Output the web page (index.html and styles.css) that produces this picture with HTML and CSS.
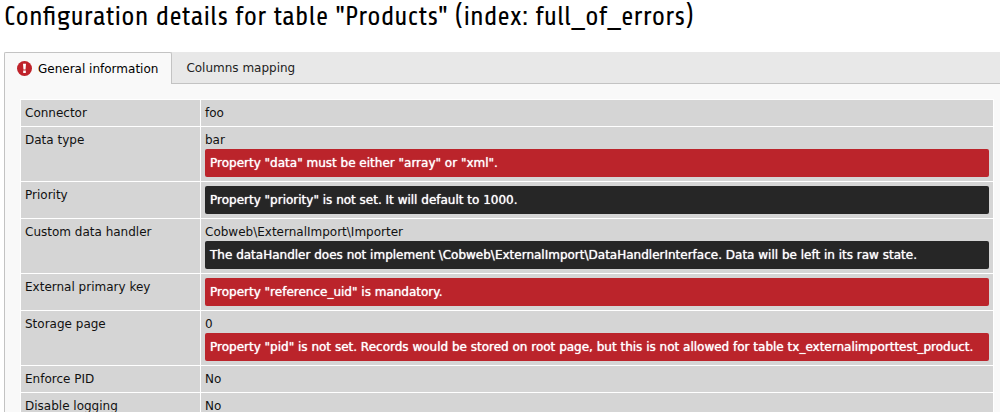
FILE: index.html
```html
<!DOCTYPE html>
<html lang="en">
<head>
<meta charset="utf-8">
<title>Configuration details</title>
<link rel="stylesheet" href="styles.css">
</head>
<body>
<main class="module">
  <h1 class="title">Configuration details for table "Products" (index: full_of_errors)</h1>
  <div class="tabs" role="tablist">
    <button class="tab tab-active" type="button" role="tab" id="tab-general" aria-selected="true" aria-controls="general">
      <svg class="tab-icon" viewBox="0 0 16 16" aria-hidden="true">
        <circle cx="8" cy="8" r="8" fill="#bf232b"/>
        <path d="M6.4 2.8h3.2L9.1 9H6.9zM6.6 10.2h2.8v2.6H6.6z" fill="#fff"/>
      </svg>
      <span>General information</span>
    </button>
    <button class="tab" type="button" role="tab" aria-selected="false">Columns mapping</button>
  </div>
  <section class="panel" id="general" role="tabpanel" aria-labelledby="tab-general">
    <table class="details">
      <tbody>
        <tr><th class="name" scope="row">Connector</th><td class="value">foo</td></tr>
        <tr><th class="name" scope="row">Data type</th><td class="value">bar<div class="label label-danger">Property "data" must be either "array" or "xml".</div></td></tr>
        <tr><th class="name" scope="row">Priority</th><td class="value"><div class="label label-notice">Property "priority" is not set. It will default to 1000.</div></td></tr>
        <tr><th class="name" scope="row">Custom data handler</th><td class="value">Cobweb\ExternalImport\Importer<div class="label label-notice">The dataHandler does not implement \Cobweb\ExternalImport\DataHandlerInterface. Data will be left in its raw state.</div></td></tr>
        <tr><th class="name" scope="row">External primary key</th><td class="value"><div class="label label-danger">Property "reference_uid" is mandatory.</div></td></tr>
        <tr><th class="name" scope="row">Storage page</th><td class="value">0<div class="label label-danger">Property "pid" is not set. Records would be stored on root page, but this is not allowed for table tx_externalimporttest_product.</div></td></tr>
        <tr><th class="name" scope="row">Enforce PID</th><td class="value">No</td></tr>
        <tr><th class="name" scope="row">Disable logging</th><td class="value">No</td></tr>
      </tbody>
    </table>
  </section>
</main>
</body>
</html>
```

FILE: styles.css
```css
* {
  box-sizing: border-box;
}

html {
  overflow: hidden;
}

body {
  margin: 0;
  background: #fff;
  color: #111;
  font: 12px/18px Verdana, "DejaVu Sans", sans-serif;
}

.module {
  padding-left: 4px;
}

.title {
  margin: 0;
  padding-bottom: 18px;
  color: #000;
  font: 400 27px/34px Share, Roboto, sans-serif;
  white-space: nowrap;
}

.tabs {
  display: flex;
  height: 32px;
  background: #e8e8e8;
  border-bottom: 1px solid #c3c3c3;
}

.tab {
  display: flex;
  align-items: center;
  gap: 6px;
  height: 32px;
  padding: 0 14px;
  border: 0;
  background: none;
  color: #222;
  font: inherit;
  white-space: nowrap;
}

.tab-active {
  padding: 0 13px 0 12px;
  border: 1px solid #c3c3c3;
  border-bottom: 0;
  border-radius: 2px 2px 0 0;
  background: #f9f9f9;
  color: #000;
}

.tab-icon {
  width: 15px;
  height: 15px;
}

.panel {
  padding: 15px 6px 16px 15px;
  border-left: 1px solid #c3c3c3;
  background: #f9f9f9;
}

.details {
  width: 100%;
  border-spacing: 1px;
  background: #fff;
}

.name,
.value {
  padding: 4px;
  background: #d5d5d5;
  font-weight: 400;
  text-align: left;
  vertical-align: top;
}

.name {
  width: 179px;
}

.label {
  padding: 5px;
  border-radius: 2px;
  color: #fff;
  text-shadow: 0 0 1px #fff;
}

.label-danger {
  background: #bb242b;
}

.label-notice {
  background: #262626;
}
```
